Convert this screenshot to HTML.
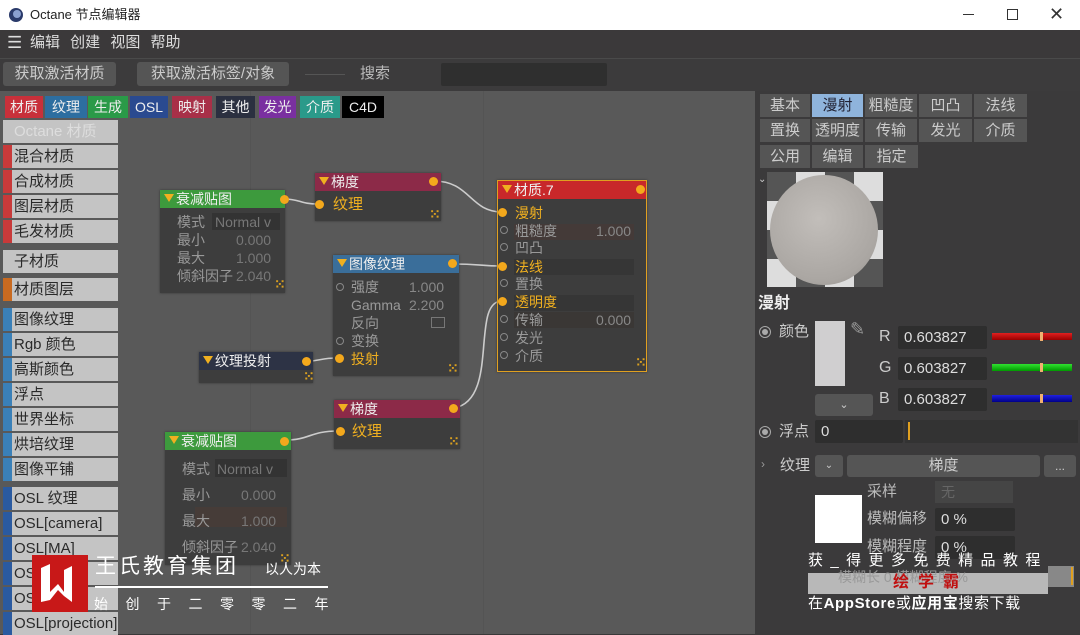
<!DOCTYPE html>
<html><head><meta charset="utf-8"><style>
*{margin:0;padding:0;box-sizing:border-box}
body{width:1080px;height:634px;overflow:hidden;background:#3a3939;font-family:"Liberation Sans","Noto Sans CJK SC",sans-serif;position:relative;color:#ddd}
.a{position:absolute}
.t{position:absolute;white-space:nowrap;line-height:1}
.li{position:absolute;left:3px;width:115px;height:23px;background:#c4c4c4;color:#2a2a2a;font-size:15px;line-height:23px;padding-left:2px;border-left:9px solid #c83a3a;white-space:nowrap;overflow:hidden}
.cat{position:absolute;top:96px;height:22px;font-size:14px;line-height:22px;text-align:center;color:#eee}
.node{position:absolute;background:#3d3d3d;box-shadow:0 0 2px #333}
.hd{position:absolute;left:0;right:0;top:0;height:18px;font-size:13px;line-height:18px;padding-left:16px;color:#eee}
.hd:before{content:"";position:absolute;left:4px;top:4px;border-left:5px solid transparent;border-right:5px solid transparent;border-top:8px solid #f0b020}
.dot{position:absolute;width:9px;height:9px;border-radius:50%;background:#f3a81c}
.odot{position:absolute;width:8px;height:8px;border-radius:50%;border:1.5px solid #888}
.r{position:absolute;font-size:14px;line-height:1;white-space:nowrap;color:#999}
.y{color:#f0b020}
.grip{position:absolute;width:10px;height:10px;font-size:14px;line-height:10px;color:#d9a020;font-weight:bold}
.tab{position:absolute;height:23px;background:#555;color:#ccc;font-size:15px;line-height:23px;text-align:center}
.fld{position:absolute;background:#2e2e2e;color:#ddd;font-size:15px;line-height:23px;padding-left:6px;border-radius:2px}
.btn{position:absolute;background:#555;border-radius:3px;color:#ccc;text-align:center}
</style></head><body>
<div class="a" style="left:0;top:0;width:1080px;height:30px;background:#fff"></div>
<div class="a" style="left:9px;top:8px;width:14px;height:14px;border-radius:50%;background:#2a3a6a"></div>
<div class="a" style="left:13px;top:10px;width:8px;height:8px;border-radius:50%;background:#8aa0d0"></div>
<div class="t" style="left:30px;top:8px;font-size:13px;color:#222">Octane 节点编辑器</div>
<div class="a" style="left:963px;top:14px;width:11px;height:1px;background:#333"></div>
<div class="a" style="left:1007px;top:9px;width:11px;height:11px;border:1px solid #333"></div>
<div class="t" style="left:1049px;top:5px;font-size:18px;color:#333">✕</div>
<div class="a" style="left:0;top:30px;width:1080px;height:28px;background:#3b393a"></div>
<div class="t" style="left:7px;top:34px;font-size:17px;color:#ddd">☰</div>
<div class="t" style="left:30px;top:35px;font-size:15px;color:#ddd;word-spacing:6px">编辑 创建 视图 帮助</div>
<div class="a" style="left:0;top:58px;width:1080px;height:1px;background:#4a4a4a"></div>
<div class="a" style="left:0;top:59px;width:1080px;height:32px;background:#3c3b3c"></div>
<div class="btn" style="left:3px;top:62px;width:113px;height:24px;font-size:15px;line-height:24px">获取激活材质</div>
<div class="btn" style="left:137px;top:62px;width:152px;height:24px;font-size:15px;line-height:24px">获取激活标签/对象</div>
<div class="a" style="left:305px;top:74px;width:40px;height:1px;background:#555"></div>
<div class="t" style="left:360px;top:66px;font-size:15px;color:#bbb">搜索</div>
<div class="a" style="left:441px;top:63px;width:166px;height:23px;background:#2f2f2f;border-radius:2px"></div>
<div class="a" style="left:0;top:91px;width:755px;height:543px;background:#595959"></div>
<div class="a" style="left:250px;top:91px;width:1px;height:543px;background:#545454"></div>
<div class="a" style="left:483px;top:91px;width:1px;height:543px;background:#545454"></div>
<div class="cat" style="left:5px;width:38px;background:#c8303a">材质</div>
<div class="cat" style="left:45px;width:42px;background:#2d6ea0">纹理</div>
<div class="cat" style="left:88px;width:40px;background:#2a9a48">生成</div>
<div class="cat" style="left:130px;width:38px;background:#2a4a90">OSL</div>
<div class="cat" style="left:172px;width:40px;background:#a83048">映射</div>
<div class="cat" style="left:216px;width:39px;background:#2b3040">其他</div>
<div class="cat" style="left:259px;width:37px;background:#7a30a0">发光</div>
<div class="cat" style="left:300px;width:40px;background:#2a9a8a">介质</div>
<div class="cat" style="left:342px;width:42px;background:#000">C4D</div>
<div class="li" style="top:120px;border-left-color:#c4c4c4;color:#ddd">Octane 材质</div>
<div class="li" style="top:145px">混合材质</div>
<div class="li" style="top:170px">合成材质</div>
<div class="li" style="top:195px">图层材质</div>
<div class="li" style="top:220px">毛发材质</div>
<div class="li" style="top:250px;border-left-color:#c4c4c4">子材质</div>
<div class="li" style="top:278px;border-left-color:#c86a20">材质图层</div>
<div class="li" style="top:308px;border-left-color:#3a80b8">图像纹理</div>
<div class="li" style="top:333px;border-left-color:#3a80b8">Rgb 颜色</div>
<div class="li" style="top:358px;border-left-color:#3a80b8">高斯颜色</div>
<div class="li" style="top:383px;border-left-color:#3a80b8">浮点</div>
<div class="li" style="top:408px;border-left-color:#3a80b8">世界坐标</div>
<div class="li" style="top:433px;border-left-color:#3a80b8">烘培纹理</div>
<div class="li" style="top:458px;border-left-color:#3a80b8">图像平铺</div>
<div class="li" style="top:487px;border-left-color:#2a5aa0">OSL 纹理</div>
<div class="li" style="top:512px;border-left-color:#2a5aa0">OSL[camera]</div>
<div class="li" style="top:537px;border-left-color:#2a5aa0">OSL[MA]</div>
<div class="li" style="top:562px;border-left-color:#2a5aa0">OSL[de]</div>
<div class="li" style="top:587px;border-left-color:#2a5aa0">OSL[ee]</div>
<div class="li" style="top:612px;border-left-color:#2a5aa0">OSL[projection]</div>
<svg class="a" style="left:0;top:0" width="760" height="634"><g fill="none" stroke="#ccc" stroke-width="1.6">
<path d="M284 199 C300 199 300 204 318 204"/>
<path d="M434 181 C470 181 470 212 502 212"/>
<path d="M453 264 C480 264 480 266 502 266"/>
<path d="M308 361 C320 361 320 358 338 358"/>
<path d="M454 408 C500 400 470 301 502 301"/>
<path d="M285 440 C310 440 310 431 338 431"/>
</g></svg>
<div class="node" style="left:160px;top:190px;width:125px;height:103px">
<div class="hd" style="background:#3d9a3d;font-size:14px">衰减贴图</div><div class="dot" style="left:120px;top:5px"></div>
<div class="r" style="left:17px;top:25px">模式</div><div class="a" style="left:52px;top:23px;width:68px;height:17px;background:#333"></div><div class="r" style="left:55px;top:25px;color:#777">Normal v</div>
<div class="r" style="left:17px;top:43px">最小</div><div class="r" style="left:76px;top:43px;color:#777">0.000</div>
<div class="r" style="left:17px;top:61px">最大</div><div class="r" style="left:76px;top:61px;color:#777">1.000</div>
<div class="r" style="left:17px;top:79px">倾斜因子</div><div class="r" style="left:76px;top:79px;color:#777">2.040</div>
<div class="grip" style="left:114px;top:89px">⁙</div></div>
<div class="node" style="left:315px;top:173px;width:126px;height:48px">
<div class="hd" style="background:#8c2a48;font-size:14px">梯度</div><div class="dot" style="left:114px;top:4px"></div>
<div class="dot" style="left:0;top:27px"></div><div class="r y" style="left:18px;top:24px;font-size:15px">纹理</div>
<div class="grip" style="left:114px;top:36px">⁙</div></div>
<div class="node" style="left:497px;top:180px;width:150px;height:192px;border:1.5px solid #e0a020">
<div class="hd" style="background:#c8282a;font-size:14px">材质.7</div><div class="dot" style="left:138px;top:4px"></div>
<div class="a" style="left:16px;top:43px;width:120px;height:16px;background:#443a38"></div>
<div class="a" style="left:16px;top:78px;width:120px;height:16px;background:#363636"></div>
<div class="a" style="left:16px;top:114px;width:120px;height:16px;background:#363636"></div>
<div class="a" style="left:16px;top:131px;width:120px;height:16px;background:#3a3735"></div>
<div class="dot" style="left:0;top:27px"></div><div class="r y" style="left:17px;top:25px">漫射</div>
<div class="odot" style="left:2px;top:45px"></div><div class="r" style="left:17px;top:43px">粗糙度</div><div class="r" style="left:98px;top:43px;color:#888">1.000</div>
<div class="odot" style="left:2px;top:62px"></div><div class="r" style="left:17px;top:60px">凹凸</div>
<div class="dot" style="left:0;top:81px"></div><div class="r y" style="left:17px;top:79px">法线</div>
<div class="odot" style="left:2px;top:98px"></div><div class="r" style="left:17px;top:96px">置换</div>
<div class="dot" style="left:0;top:116px"></div><div class="r y" style="left:17px;top:114px">透明度</div>
<div class="odot" style="left:2px;top:134px"></div><div class="r" style="left:17px;top:132px">传输</div><div class="r" style="left:98px;top:132px;color:#888">0.000</div>
<div class="odot" style="left:2px;top:152px"></div><div class="r" style="left:17px;top:150px">发光</div>
<div class="odot" style="left:2px;top:170px"></div><div class="r" style="left:17px;top:168px">介质</div>
<div class="grip" style="left:137px;top:176px">⁙</div></div>
<div class="node" style="left:333px;top:255px;width:126px;height:121px">
<div class="hd" style="background:#3a6e9a;font-size:14px">图像纹理</div><div class="dot" style="left:115px;top:4px"></div>
<div class="odot" style="left:3px;top:28px"></div><div class="r" style="left:18px;top:25px">强度</div><div class="r" style="left:76px;top:25px;color:#888">1.000</div>
<div class="r" style="left:18px;top:43px">Gamma</div><div class="r" style="left:76px;top:43px;color:#888">2.200</div>
<div class="r" style="left:18px;top:61px">反向</div><div class="a" style="left:98px;top:62px;width:14px;height:11px;border:1px solid #777"></div>
<div class="odot" style="left:3px;top:82px"></div><div class="r" style="left:18px;top:79px">变换</div>
<div class="dot" style="left:2px;top:99px"></div><div class="r y" style="left:18px;top:97px">投射</div>
<div class="grip" style="left:114px;top:108px">⁙</div></div>
<div class="node" style="left:199px;top:352px;width:114px;height:31px">
<div class="hd" style="background:#2d3345;font-size:14px">纹理投射</div><div class="dot" style="left:103px;top:5px"></div>
<div class="grip" style="left:104px;top:19px">⁙</div></div>
<div class="node" style="left:334px;top:400px;width:126px;height:49px">
<div class="hd" style="background:#8c2a48;font-size:14px">梯度</div><div class="dot" style="left:115px;top:4px"></div>
<div class="dot" style="left:2px;top:27px"></div><div class="r y" style="left:18px;top:24px;font-size:15px">纹理</div>
<div class="grip" style="left:114px;top:36px">⁙</div></div>
<div class="node" style="left:165px;top:432px;width:126px;height:133px">
<div class="hd" style="background:#3d9a3d;font-size:14px">衰减贴图</div><div class="dot" style="left:115px;top:5px"></div>
<div class="r" style="left:17px;top:30px">模式</div><div class="a" style="left:50px;top:27px;width:72px;height:18px;background:#333"></div><div class="r" style="left:52px;top:30px;color:#777">Normal v</div>
<div class="r" style="left:17px;top:56px">最小</div><div class="r" style="left:76px;top:56px;color:#777">0.000</div>
<div class="a" style="left:30px;top:75px;width:92px;height:20px;background:#463c38"></div>
<div class="r" style="left:17px;top:82px">最大</div><div class="r" style="left:76px;top:82px;color:#777">1.000</div>
<div class="r" style="left:17px;top:108px">倾斜因子</div><div class="r" style="left:76px;top:108px;color:#777">2.040</div>
<div class="grip" style="left:114px;top:121px">⁙</div></div>
<div class="a" style="left:755px;top:91px;width:325px;height:543px;background:#3b3a3b"></div>
<div class="tab" style="left:760px;top:94px;width:50px">基本</div>
<div class="tab" style="left:812px;top:94px;width:51px;background:#8fb4dc;color:#223">漫射</div>
<div class="tab" style="left:865px;top:94px;width:52px">粗糙度</div>
<div class="tab" style="left:919px;top:94px;width:53px">凹凸</div>
<div class="tab" style="left:974px;top:94px;width:53px">法线</div>
<div class="tab" style="left:760px;top:119px;width:50px">置换</div>
<div class="tab" style="left:812px;top:119px;width:51px">透明度</div>
<div class="tab" style="left:865px;top:119px;width:52px">传输</div>
<div class="tab" style="left:919px;top:119px;width:53px">发光</div>
<div class="tab" style="left:974px;top:119px;width:53px">介质</div>
<div class="tab" style="left:760px;top:145px;width:50px">公用</div>
<div class="tab" style="left:812px;top:145px;width:51px">编辑</div>
<div class="tab" style="left:865px;top:145px;width:53px">指定</div>
<div class="t" style="left:758px;top:175px;font-size:10px;color:#ccc">⌄</div>
<div class="a" style="left:767px;top:172px;width:116px;height:115px;background:
conic-gradient(#ddd 25%,#555 0 50%,#ddd 0 75%,#555 0) 0 0/58px 58px"></div>
<div class="a" style="left:770px;top:175px;width:108px;height:110px;border-radius:50%;background:radial-gradient(circle at 45% 40%,#c2beba,#aaa6a2 70%,#8e8a86)"></div>
<div class="t" style="left:758px;top:296px;font-size:16px;font-weight:bold;color:#eee">漫射</div>
<div class="a" style="left:759px;top:326px;width:12px;height:12px;border-radius:50%;border:1.5px solid #aaa"></div><div class="a" style="left:762px;top:329px;width:6px;height:6px;border-radius:50%;background:#aaa"></div>
<div class="t" style="left:779px;top:324px;font-size:15px;color:#ccc">颜色</div>
<div class="a" style="left:815px;top:321px;width:30px;height:65px;background:#d0cfd0"></div>
<div class="t" style="left:850px;top:320px;font-size:18px;color:#999">✎</div>
<div class="btn" style="left:815px;top:394px;width:58px;height:22px;font-size:11px;line-height:22px">⌄</div>
<div class="t" style="left:879px;top:329px;font-size:16px;color:#ccc">R</div>
<div class="t" style="left:879px;top:360px;font-size:16px;color:#ccc">G</div>
<div class="t" style="left:879px;top:391px;font-size:16px;color:#ccc">B</div>
<div class="fld" style="left:898px;top:326px;width:89px">0.603827</div>
<div class="fld" style="left:898px;top:357px;width:89px">0.603827</div>
<div class="fld" style="left:898px;top:388px;width:89px">0.603827</div>
<div class="a" style="left:992px;top:333px;width:80px;height:7px;background:linear-gradient(#e02020,#900)"></div>
<div class="a" style="left:992px;top:364px;width:80px;height:7px;background:linear-gradient(#30e030,#090)"></div>
<div class="a" style="left:992px;top:395px;width:80px;height:7px;background:linear-gradient(#2020e0,#008)"></div>
<div class="a" style="left:1040px;top:332px;width:3px;height:9px;background:#f0b070"></div>
<div class="a" style="left:1040px;top:363px;width:3px;height:9px;background:#f0b070"></div>
<div class="a" style="left:1040px;top:394px;width:3px;height:9px;background:#f0b070"></div>
<div class="a" style="left:759px;top:426px;width:12px;height:12px;border-radius:50%;border:1.5px solid #aaa"></div><div class="a" style="left:762px;top:429px;width:6px;height:6px;border-radius:50%;background:#aaa"></div>
<div class="t" style="left:779px;top:424px;font-size:15px;color:#ccc">浮点</div>
<div class="fld" style="left:815px;top:420px;width:88px">0</div>
<div class="a" style="left:905px;top:420px;width:173px;height:23px;background:#333"></div>
<div class="a" style="left:908px;top:422px;width:2px;height:18px;background:#e0a020"></div>
<div class="t" style="left:761px;top:458px;font-size:12px;color:#999">›</div>
<div class="t" style="left:780px;top:458px;font-size:15px;color:#ccc">纹理</div>
<div class="btn" style="left:815px;top:455px;width:28px;height:22px;font-size:10px;line-height:22px">⌄</div>
<div class="btn" style="left:847px;top:455px;width:193px;height:22px;font-size:15px;line-height:22px">梯度</div>
<div class="btn" style="left:1044px;top:455px;width:32px;height:22px;font-size:12px;line-height:22px">...</div>
<div class="a" style="left:815px;top:495px;width:47px;height:48px;background:#fff"></div>
<div class="t" style="left:867px;top:484px;font-size:15px;color:#bbb">采样</div>
<div class="a" style="left:935px;top:481px;width:78px;height:22px;background:#454545"></div><div class="t" style="left:941px;top:485px;font-size:14px;color:#666">无</div>
<div class="t" style="left:867px;top:511px;font-size:15px;color:#bbb">模糊偏移</div>
<div class="fld" style="left:935px;top:508px;width:80px">0 %</div>
<div class="t" style="left:867px;top:539px;font-size:15px;color:#bbb">模糊程度</div>
<div class="fld" style="left:935px;top:536px;width:80px">0 %</div>
<div class="a" style="left:808px;top:573px;width:240px;height:21px;background:#b8b8b8"></div>
<div class="a" style="left:1048px;top:566px;width:26px;height:21px;background:#888"></div>
<div class="a" style="left:1071px;top:567px;width:2px;height:18px;background:#e0a020"></div>
<div class="t" style="left:838px;top:570px;font-size:14px;color:#999">模糊长 0 模糊程度 %</div>
<div class="t" style="left:808px;top:553px;font-size:15px;color:#fff;letter-spacing:7.4px">获_得更多免费精品教程</div>
<div class="t" style="left:893px;top:575px;font-size:16px;font-weight:bold;color:#c01010;letter-spacing:9px">绘学霸</div>
<div class="t" style="left:808px;top:596px;font-size:15px;color:#fff;letter-spacing:0.6px">在<b>AppStore</b>或<b>应用宝</b>搜索下载</div>
<div class="a" style="left:32px;top:555px;width:56px;height:57px;background:#c81818"></div>
<svg class="a" style="left:36px;top:562px" width="48" height="44"><path d="M5 6 L14 2 L14 30 L22 22 L28 30 L28 8 L36 4 L36 40 L28 34 L22 28 L14 38 L5 40 Z" fill="#fff"/></svg>
<div class="t" style="left:95px;top:556px;font-size:21px;color:#fff;letter-spacing:3px">王氏教育集团</div>
<div class="t" style="left:265px;top:562px;font-size:14px;color:#fff">以人为本</div>
<div class="a" style="left:95px;top:586px;width:233px;height:2px;background:#fff"></div>
<div class="t" style="left:94px;top:597px;font-size:14px;color:#fff;letter-spacing:17.5px">始创于二零零二年</div>
</body></html>
